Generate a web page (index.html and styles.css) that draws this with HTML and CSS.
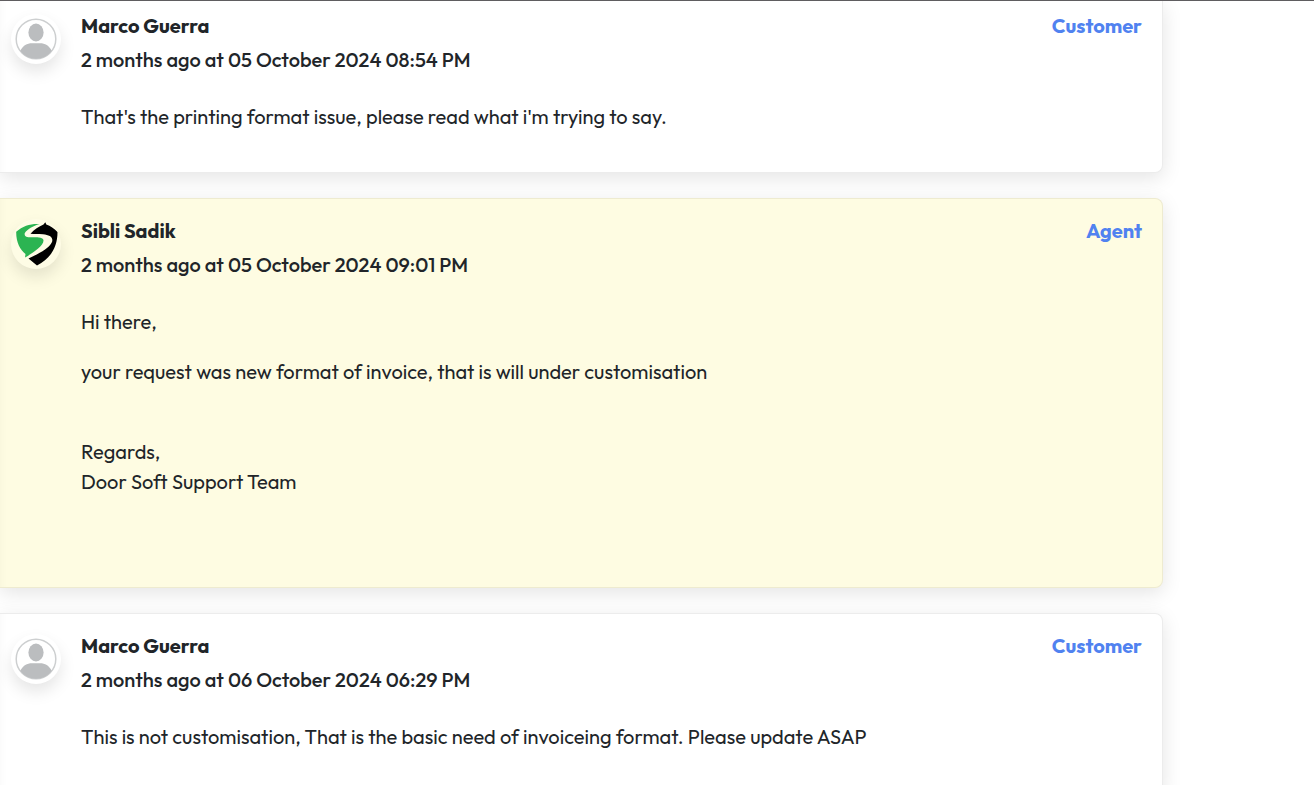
FILE: index.html
```html
<!doctype html>
<html lang="en">
<head>
<meta charset="utf-8">
<title>Ticket conversation</title>
<link rel="stylesheet" href="styles.css">
</head>

<body>
<svg class="sprite" aria-hidden="true">
    <symbol id="user" viewBox="-1 -1 50 50">
        <circle cx="24" cy="24" r="19.8" fill="#fff" stroke="#cdcfd0" stroke-width="1.5"/>
        <ellipse cx="24" cy="17.5" rx="7.6" ry="9" fill="#bbbdbf"/>
        <path d="M8.2 35.8C11 30.5 15 28.2 20 28.2h8c5 0 9 2.3 11.8 7.6C36 41 30.5 43.8 24 43.8S12 41 8.2 35.8z" fill="#bbbdbf"/>
    </symbol>
    <symbol id="brand" viewBox="-1 -1 50 50">
        <path d="M4.2 11.800C11 5.500 19 3.500 27.500 4C21 6 15.500 9 12.800 13C12 16.500 14.500 17.300 19 17.300C25 17.300 31.500 17 31.500 20.500C31.500 26 20 33.500 13 37.500L13.500 34C8 30 4 22 4.200 11.800z" fill="#2cb452"/>
        <path d="M18.500 13.800C22 9.500 27 6.500 31.500 4.500L33.300 2.200L34.300 4.500C38.500 6 42 8.500 45.500 12C45.500 26.500 39 38.500 25 45.500L16.500 38.500C27 33.500 37 28.500 40 22C41.500 17 37.500 15 31 14.200C26 13.800 22 14.200 18.500 13.800z" fill="#000"/>
    </symbol>
</svg>
<main class="thread">
    <article class="card first">
        <svg class="avatar" role="img" aria-label="Marco Guerra"><use href="#user"/></svg>
        <div class="content">
            <div class="head">
                <h2>Marco Guerra</h2>
                <span class="role">Customer</span>
            </div>
            <p class="date">2 months ago at 05 October 2024 08:54 PM</p>
            <div class="text">
                <p>That's the printing format issue, please read what i'm trying to say.</p>
            </div>
        </div>
    </article>
    <article class="card agent">
        <svg class="avatar" role="img" aria-label="Sibli Sadik"><use href="#brand"/></svg>
        <div class="content">
            <div class="head">
                <h2>Sibli Sadik</h2>
                <span class="role">Agent</span>
            </div>
            <p class="date">2 months ago at 05 October 2024 09:01 PM</p>
            <div class="text">
                <p>Hi there,</p>
                <p>your request was new format of invoice, that is will under customisation</p>
                <p><br>Regards,<br>Door Soft Support Team</p>
                <p><br></p>
            </div>
        </div>
    </article>
    <article class="card">
        <svg class="avatar" role="img" aria-label="Marco Guerra"><use href="#user"/></svg>
        <div class="content">
            <div class="head">
                <h2>Marco Guerra</h2>
                <span class="role">Customer</span>
            </div>
            <p class="date">2 months ago at 06 October 2024 06:29 PM</p>
            <div class="text">
                <p>This is not customisation, That is the basic need of invoiceing format. Please update ASAP</p>
            </div>
        </div>
    </article>
</main>
</body>
</html>
```

FILE: styles.css
```css
* { padding: 0; margin: 0; box-sizing: border-box; }
html { overflow: hidden; }
body { background: #fff; color: #212529; font: 20px/30px Outfit, Lato, sans-serif; border-top: 1px solid #5f5d60; }
.sprite { display: none; }
.thread { display: flex; flex-direction: column; gap: 25px; padding-right: 151px; }
.card { display: flex; gap: 20px; padding: 17px 20px 20px 11px; background: #fff; border: 1px solid #ececec; border-left: 0; border-radius: 0 8px 8px 0; box-shadow: 0 5px 20px rgba(0,0,0,.11), inset 8px 0 8px -8px rgba(0,60,40,.04); }
.first { padding-top: 10px; border-top: 0; border-top-right-radius: 0; }
.agent { background: #fefce2; border-color: #eeebd0; }
.avatar { flex: none; width: 50px; height: 50px; margin-top: 3px; border-radius: 50%; background: #fff; box-shadow: 0 8px 16px rgba(0,0,0,.1); }
.agent .avatar { background: #fefce5; }
.content { flex: 1; }
.head { display: flex; justify-content: space-between; margin-bottom: 4px; }
h2, .role { font-size: 20px; font-weight: 700; }
.role { color: #5082f0; }
.date { font-weight: 500; }
.text { margin-top: 27px; }
.text p { margin-bottom: 20px; }
```
